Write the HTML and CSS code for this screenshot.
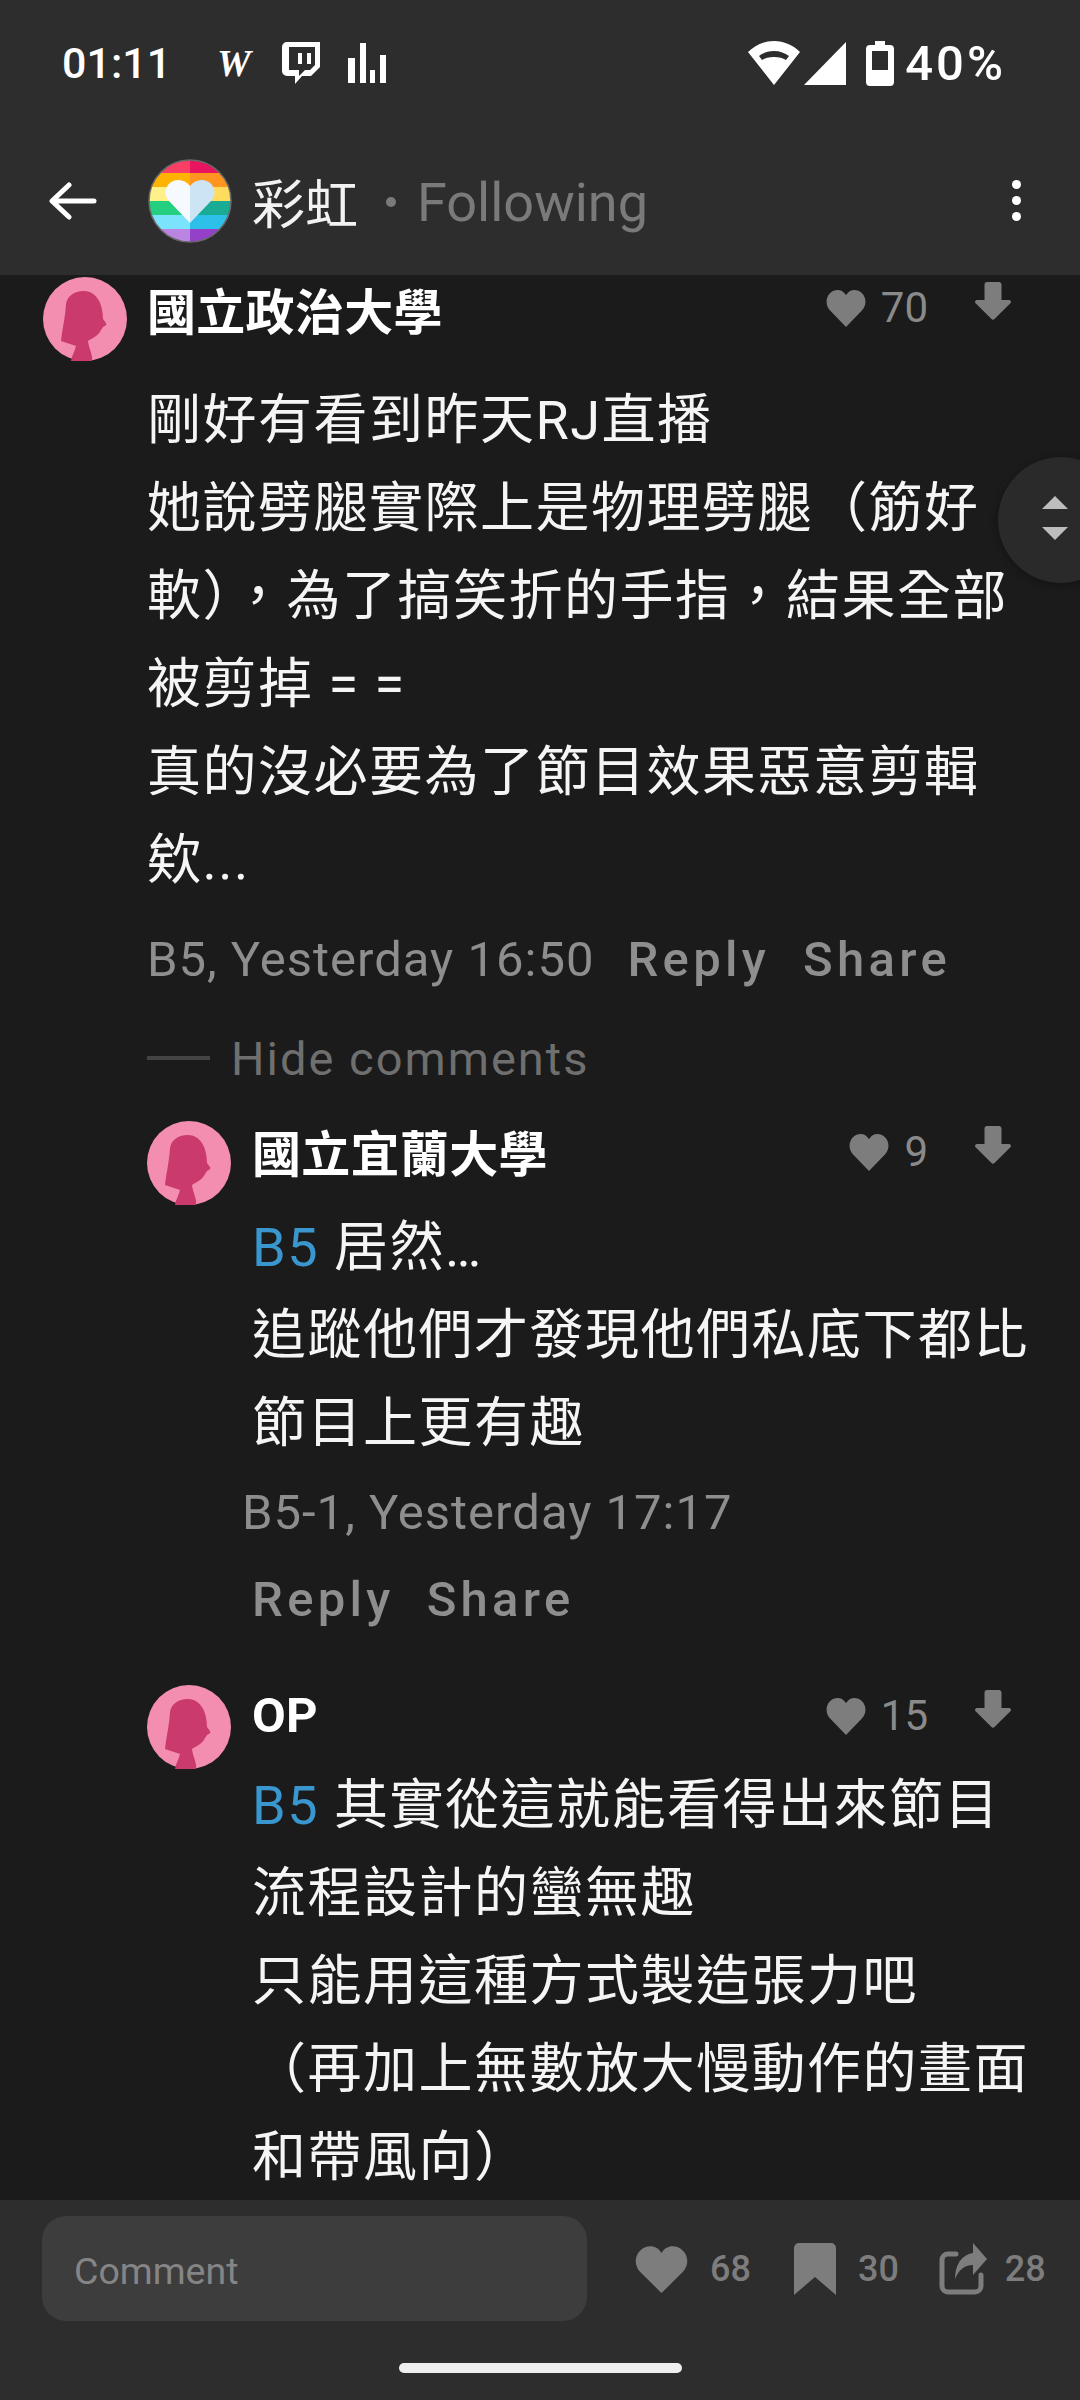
FILE: index.html
```html
<!DOCTYPE html>
<html lang="zh-Hant">
<head>
    <meta charset="UTF-8">
    <meta name="viewport" content="width=device-width, initial-scale=1.0">
    <title>彩虹</title>
    <link rel="stylesheet" href="styles.css">
</head>
<body>
    <svg class="defs" width="0" height="0">
        <symbol id="avatar" viewBox="0 0 84 84">
            <circle cx="42" cy="42" r="42" fill="#f48eb0"/>
            <path d="M41 14C30 14 24 20 23 27C22 42 19 54 18 64L33 69C32 74 29 78 28 84L49 84C50 78 46 72 45 64C50 61 56 58 58 53L60 50C63 49 64 47 63 46L60 42C60 26 53 14 41 14Z" fill="#cb3a6d"/>
        </symbol>
        <symbol id="heart" viewBox="0 0 24 24" preserveAspectRatio="none">
            <path d="M12 24 2.600 13.800C-.4 10.600-.4 5.600 2.400 2.700 5.400-.4 10 0 12 4c2-4 6.600-4.400 9.600-1.300 2.800 2.900 2.800 7.900-.2 11.100z"/>
        </symbol>
        <symbol id="down" viewBox="0 0 36 38">
            <path d="M9.500 2.500c0-1.400 1.100-2.500 2.500-2.500h12c1.400 0 2.500 1.100 2.500 2.500V18h7.500c1.700 0 2.600 2 1.400 3.300L19.500 37c-.8.900-2.200.9-3 0L.6 21.300C-.6 20 .3 18 2 18h7.500z"/>
        </symbol>
    </svg>

    <div class="screen">
        <header class="topbar">
            <div class="statusbar">
                <span class="clock">01:11</span>
                <span class="w-icon">W</span>
                <svg class="twitch" viewBox="0 0 38 42" fill="#fff">
                    <path fill-rule="evenodd" d="M5 0h33v25l-9 9h-9l-7 8v-8H5a5 5 0 0 1-5-5V5a5 5 0 0 1 5-5zm2 5v23h10v6l6-6h5l5-5V5zm9 6h4v11h-4zm9 0h4v11h-4z"/>
                </svg>
                <svg class="bars" viewBox="0 0 38 40" fill="#fff">
                    <rect x="0" y="15" width="7" height="25"/>
                    <rect x="12" y="0" width="6" height="40"/>
                    <rect x="22" y="27" width="5" height="13"/>
                    <rect x="32" y="12" width="6" height="28"/>
                </svg>
                <span class="status-right">
                    <svg class="wifi" viewBox="0 0 52 44" fill="#fff">
                        <path fill-rule="evenodd" d="M26 0c10 0 19 4 26 11L26 44 0 11C7 4 16 0 26 0zm0 10c-6 0-11 2-15 5l3 4c3-2 7-3 12-3s9 1 12 3l3-4c-4-3-9-5-15-5z"/>
                    </svg>
                    <svg class="cell" viewBox="0 0 42 43" fill="#fff"><path d="M42 0v43H0z"/></svg>
                    <svg class="battery" viewBox="0 0 28 45" fill="#fff">
                        <path fill-rule="evenodd" d="M9 0h10v4h5a4 4 0 0 1 4 4v33a4 4 0 0 1-4 4H4a4 4 0 0 1-4-4V8a4 4 0 0 1 4-4h5zM6 10v19h16V10z"/>
                    </svg>
                    <span class="battery-text">40%</span>
                </span>
            </div>
            <nav class="navbar">
                <svg class="back" viewBox="0 0 48 38" fill="none" stroke="#fff" stroke-width="5" stroke-linecap="round" stroke-linejoin="round">
                    <path d="M45 19H4M20 3 3 19l17 16"/>
                </svg>
                <svg class="board-logo" viewBox="0 0 84 84">
                    <clipPath id="logoClip"><circle cx="42" cy="42" r="41"/></clipPath>
                    <g clip-path="url(#logoClip)">
                        <rect width="42" height="14" fill="#fb3e66"/><rect x="42" width="42" height="14" fill="#e8145f"/>
                        <rect y="14" width="42" height="14" fill="#ffb300"/><rect x="42" y="14" width="42" height="14" fill="#ff9420"/>
                        <rect y="28" width="42" height="14" fill="#fff18a"/><rect x="42" y="28" width="42" height="14" fill="#ffdb5e"/>
                        <rect y="42" width="42" height="14" fill="#24cf80"/><rect x="42" y="42" width="42" height="14" fill="#19ab93"/>
                        <rect y="56" width="42" height="14" fill="#7be3fb"/><rect x="42" y="56" width="42" height="14" fill="#2dc1ea"/>
                        <rect y="70" width="42" height="14" fill="#b985e0"/><rect x="42" y="70" width="42" height="14" fill="#9441c8"/>
                    </g>
                    <circle cx="42" cy="42" r="41" fill="none" stroke="#6a6a6a" stroke-width="1.500"/>
                    <path d="M42 64 21 42c-8-9-1-21 9-21 5 0 9 2 12 6z" fill="#f6faff"/>
                    <path d="M42 64l21-22c8-9 1-21-9-21-5 0-9 2-12 6z" fill="#cde4f5"/>
                </svg>
                <span class="board-name">彩虹</span>
                <span class="board-dot"></span>
                <span class="board-follow">Following</span>
                <span class="kebab"><i></i><i></i><i></i></span>
            </nav>
        </header>

        <main class="thread">
            <article class="comment">
                <svg class="avatar"><use href="#avatar"/></svg>
                <div class="comment-main">
                    <div class="comment-head">
                        <h3 class="author">國立政治大學</h3>
                        <span class="likes"><svg class="like-icon"><use href="#heart"/></svg>70</span>
                        <svg class="down-icon"><use href="#down"/></svg>
                    </div>
                    <p class="comment-text first-text">剛好有看到昨天RJ直播<br>她說劈腿實際上是物理劈腿（筋好軟），為了搞笑折的手指，結果全部被剪掉 = =<br>真的沒必要為了節目效果惡意剪輯欸...</p>
                    <div class="comment-meta">
                        <span class="meta-time">B5, Yesterday 16:50</span>
                        <span class="meta-action">Reply</span>
                        <span class="meta-action">Share</span>
                    </div>
                    <div class="hide-comments"><span class="hide-line"></span>Hide comments</div>
                </div>
            </article>

            <article class="comment reply">
                <svg class="avatar"><use href="#avatar"/></svg>
                <div class="comment-main">
                    <div class="comment-head">
                        <h3 class="author">國立宜蘭大學</h3>
                        <span class="likes"><svg class="like-icon"><use href="#heart"/></svg>9</span>
                        <svg class="down-icon"><use href="#down"/></svg>
                    </div>
                    <p class="comment-text"><span class="mention">B5</span> 居然…<br>追蹤他們才發現他們私底下都比節目上更有趣</p>
                    <div class="comment-meta wrapped">
                        <span class="meta-time">B5-1, Yesterday 17:17</span>
                        <div class="meta-actions">
                            <span class="meta-action">Reply</span>
                            <span class="meta-action">Share</span>
                        </div>
                    </div>
                </div>
            </article>

            <article class="comment reply">
                <svg class="avatar"><use href="#avatar"/></svg>
                <div class="comment-main">
                    <div class="comment-head latin-head">
                        <h3 class="author">OP</h3>
                        <span class="likes"><svg class="like-icon"><use href="#heart"/></svg>15</span>
                        <svg class="down-icon"><use href="#down"/></svg>
                    </div>
                    <p class="comment-text"><span class="mention">B5</span> 其實從這就能看得出來節目流程設計的蠻無趣<br>只能用這種方式製造張力吧<br>（再加上無數放大慢動作的畫面和帶風向）</p>
                </div>
            </article>

            <div class="scroll-button">
                <span class="arrow-up"></span>
                <span class="arrow-down"></span>
            </div>
        </main>

        <footer class="bottombar">
            <div class="actions">
                <div class="comment-input">Comment</div>
                <span class="action heart-action">
                    <svg class="action-heart"><use href="#heart"/></svg>68
                </span>
                <span class="action">
                    <svg class="action-bookmark" viewBox="0 0 42 52"><path d="M5 0h32a5 5 0 0 1 5 5v47L21 34 0 52V5a5 5 0 0 1 5-5z"/></svg>30
                </span>
                <span class="action">
                    <svg class="action-share" viewBox="0 0 48 52">
                        <path d="M17 11H9a6 6 0 0 0-6 6v26a6 6 0 0 0 6 6h27a6 6 0 0 0 6-6v-11" fill="none" stroke="#7d7d7d" stroke-width="5" stroke-linecap="round"/>
                        <path d="M34 0l14 16-14 16V22c-9 0-14 5-18 14 0-14 6-24 18-26z"/>
                    </svg>28
                </span>
            </div>
            <div class="home-bar"></div>
        </footer>
    </div>
</body>
</html>
```

FILE: styles.css
```css
* {
    margin: 0;
    padding: 0;
    box-sizing: border-box;
}
html, body {
    width: 1080px;
    height: 2400px;
    overflow: hidden;
}
body {
    background-color: #1b1b1b;
    font-family: Roboto, "Noto Sans CJK TC", sans-serif;
}
.defs {
    position: absolute;
}
.screen {
    display: flex;
    flex-direction: column;
    height: 2400px;
}

/* top */
.topbar {
    height: 275px;
    flex-shrink: 0;
    background-color: #2d2d2d;
    color: white;
}
.statusbar {
    display: flex;
    align-items: center;
    height: 126px;
    padding: 0 76px 0 62px;
}
.clock {
    font-size: 43px;
    font-weight: 500;
    width: 155px;
}
.w-icon {
    width: 65px;
    font: italic 700 38px "Liberation Serif", serif;
}
.twitch {
    width: 38px;
    height: 42px;
    margin-right: 28px;
}
.bars {
    width: 38px;
    height: 40px;
}
.status-right {
    display: flex;
    align-items: center;
    margin-left: auto;
}
.wifi {
    width: 52px;
    height: 44px;
    margin-right: 4px;
}
.cell {
    width: 42px;
    height: 43px;
    margin-right: 20px;
}
.battery {
    width: 28px;
    height: 45px;
    margin-right: 11px;
}
.battery-text {
    font-size: 49px;
    font-weight: 500;
    letter-spacing: 3px;
    margin-right: -2px;
}
.navbar {
    display: flex;
    align-items: center;
    height: 149px;
    padding-left: 49px;
}
.back {
    width: 48px;
    height: 38px;
    margin-right: 51px;
}
.board-logo {
    width: 84px;
    height: 84px;
    margin-right: 20px;
}
.board-name {
    font-size: 53px;
    width: 134px;
    color: #f2f2f2;
}
.board-dot {
    width: 10px;
    height: 10px;
    border-radius: 50%;
    background-color: #7a7a7a;
    margin-top: 3px;
    margin-right: 21px;
}
.board-follow {
    font-size: 54px;
    margin-top: 3px;
    color: #7a7a7a;
}
.kebab {
    display: flex;
    flex-direction: column;
    gap: 7px;
    margin-left: auto;
    margin-right: 59px;
}
.kebab i {
    width: 9px;
    height: 9px;
    border-radius: 50%;
    background-color: white;
}

/* comments */
.thread {
    position: relative;
    flex: 1;
    overflow: hidden;
}
.comment {
    display: flex;
    padding: 2px 30px 0 43px;
    gap: 20px;
}
.comment.reply {
    padding-top: 35px;
    padding-left: 147px;
    gap: 21px;
}
.comment.reply + .comment.reply {
    padding-top: 57px;
}
.avatar {
    width: 84px;
    height: 84px;
    flex-shrink: 0;
}
.comment-main {
    flex: 1;
    min-width: 0;
}
.comment-head {
    display: flex;
    align-items: flex-start;
    height: 86px;
    padding-right: 39px;
}
.reply .comment-head {
    height: 83px;
}
.reply .comment-head.latin-head {
    height: 77px;
}
.author {
    flex: 1;
    font-size: 49px;
    line-height: 66px;
    letter-spacing: 0.300px;
    padding-top: 4px;
    font-weight: 700;
    color: white;
}
.reply .author {
    padding-top: 2px;
}
.reply .latin-head .author {
    line-height: 62px;
    padding-top: 0;
}
.likes {
    display: flex;
    align-items: center;
    font-size: 42px;
    line-height: 62px;
    color: #8a8a8a;
}
.like-icon {
    width: 40px;
    height: 38px;
    fill: #7d7d7d;
    margin-right: 15px;
}
.down-icon {
    width: 36px;
    height: 38px;
    fill: #7d7d7d;
    margin-left: 47px;
    margin-top: 5px;
}
.comment-text {
    font-size: 54px;
    line-height: 88px;
    letter-spacing: 1.500px;
    color: #f5f5f5;
}
.first-text {
    margin-top: 14px;
}
.mention {
    color: #3a96cf;
}
.comment-meta {
    display: flex;
    align-items: center;
    gap: 33px;
    height: 88px;
    margin-top: 10px;
    font-size: 49px;
    letter-spacing: 1px;
    color: #8e8e8e;
}
.meta-action {
    font-weight: 500;
    letter-spacing: 4.300px;
}
.hide-comments {
    display: flex;
    align-items: center;
    height: 56px;
    margin-top: 27px;
    font-size: 47px;
    letter-spacing: 2px;
    color: #6f6f6f;
}
.hide-line {
    width: 63px;
    height: 4px;
    background-color: #444444;
    margin-right: 21px;
}
.comment-meta.wrapped {
    display: block;
    height: auto;
    margin-top: 16px;
    margin-left: -10px;
}
.meta-actions {
    display: flex;
    gap: 32px;
    margin-top: 30px;
    margin-left: 10px;
}

/* floating thing over the text */
.scroll-button {
    position: absolute;
    top: 182px;
    left: 998px;
    width: 126px;
    height: 126px;
    border-radius: 50%;
    background-color: #2a2a2a;
    box-shadow: 0 2px 8px rgba(0, 0, 0, 0.3);
}
.arrow-up, .arrow-down {
    position: absolute;
    left: 44px;
    width: 0;
    height: 0;
    border-left: 13px solid transparent;
    border-right: 13px solid transparent;
}
.arrow-up {
    top: 39px;
    border-bottom: 13px solid #bdbdbd;
}
.arrow-down {
    top: 70px;
    border-top: 13px solid #bdbdbd;
}

/* bottom */
.bottombar {
    height: 200px;
    flex-shrink: 0;
    background-color: #2d2d2d;
    padding-top: 16px;
}
.actions {
    display: flex;
    align-items: center;
    height: 105px;
    padding-left: 42px;
    color: #7d7d7d;
    font-size: 36px;
    font-weight: 500;
}
.comment-input {
    width: 545px;
    height: 105px;
    line-height: 105px;
    padding: 3px 0 0 32px;
    border-radius: 24px;
    background-color: #3d3d3d;
    font-size: 37.500px;
    font-weight: 400;
    color: #858585;
    margin-right: 48px;
}
.action {
    display: flex;
    align-items: center;
    gap: 22px;
    margin-right: 43px;
}
.action:last-child {
    margin-right: 0;
}
.action svg {
    fill: #7d7d7d;
}
.action-heart {
    width: 53px;
    height: 48px;
}
.action-bookmark {
    width: 42px;
    height: 52px;
}
.action-share {
    width: 48px;
    height: 52px;
    margin-left: -3px;
    margin-right: -4px;
}
.home-bar {
    width: 283px;
    height: 10px;
    margin: 42px auto 0;
    border-radius: 5px;
    background-color: #eeeeee;
}
```
